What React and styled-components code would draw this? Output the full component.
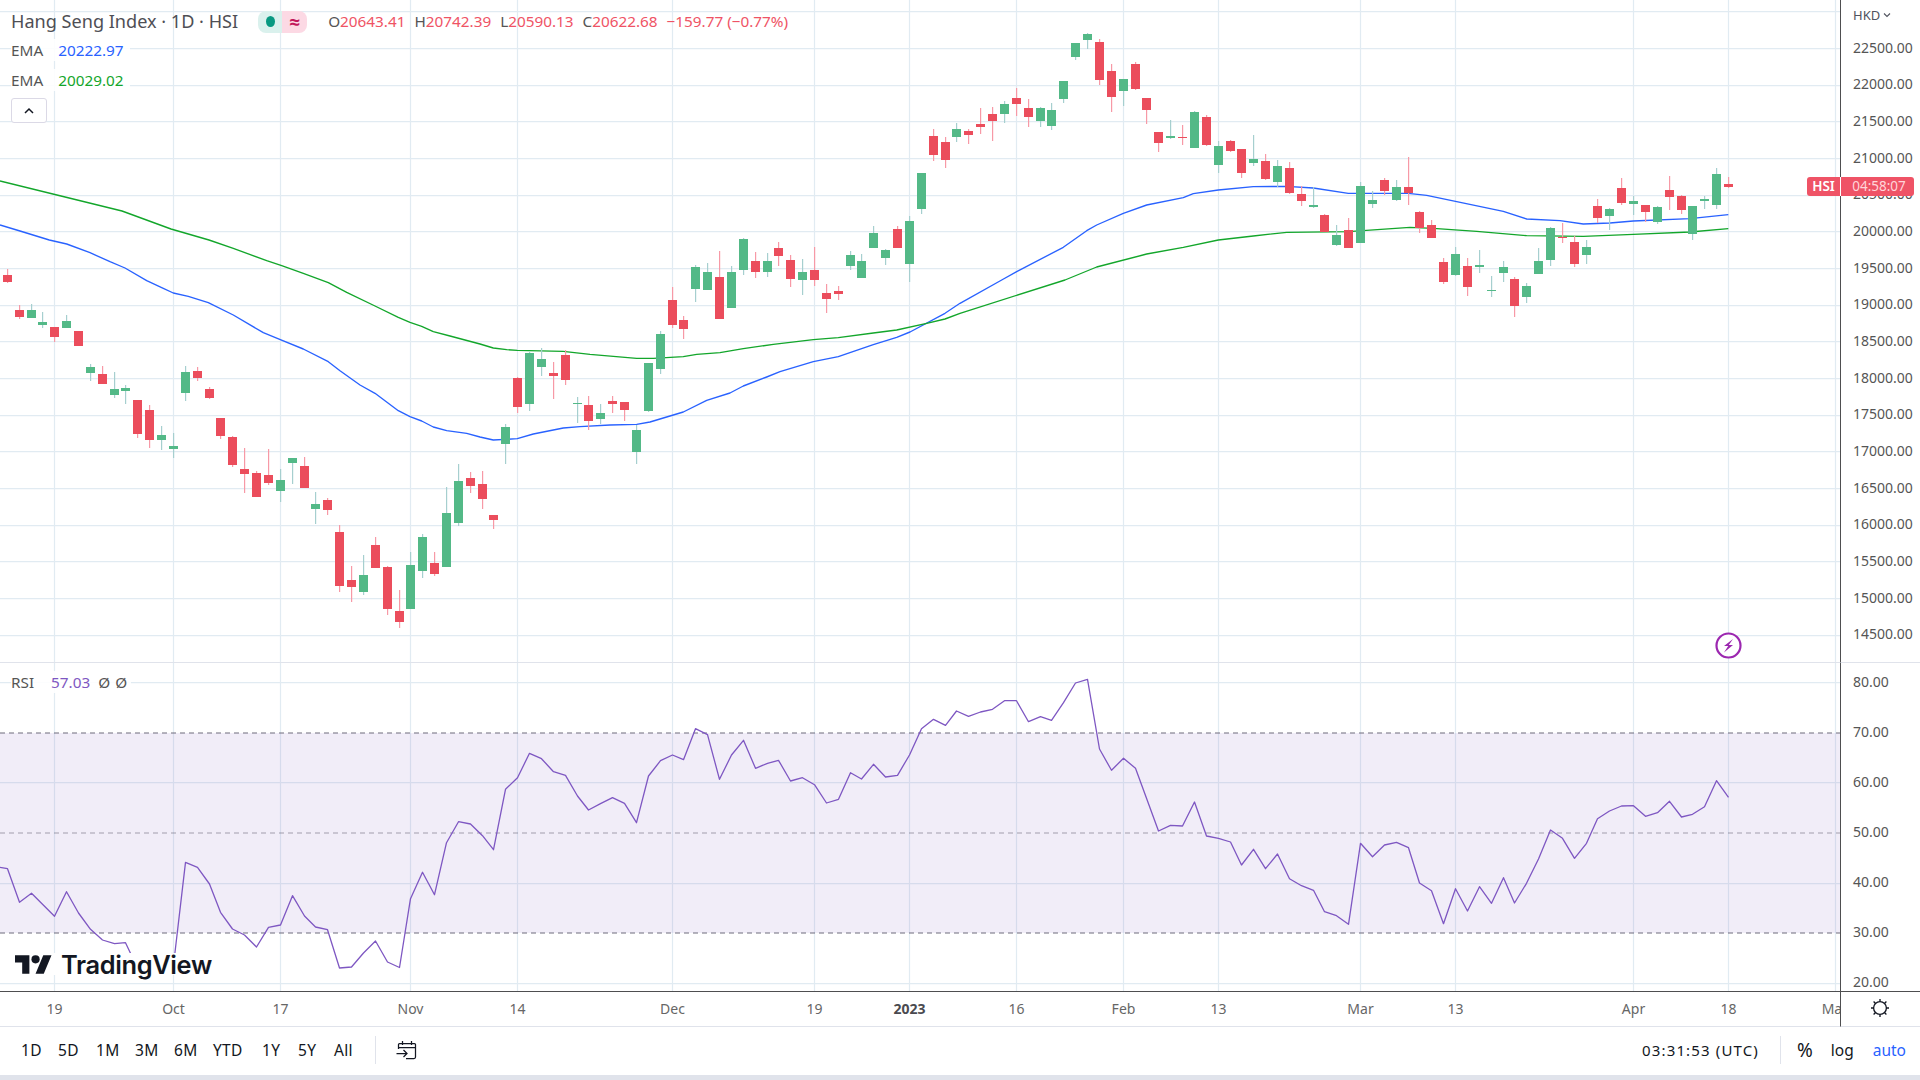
import React from "react";
import styled, { createGlobalStyle } from "styled-components";

const UI_FONT = `"Noto Sans", "Open Sans", sans-serif`;

const GlobalStyle = createGlobalStyle`
  html, body { margin: 0; padding: 0; background: #ffffff; }
  body { font-family: ${UI_FONT}; color: #131722; }
  #root { width: 1920px; height: 1080px; overflow: hidden; }
  * { box-sizing: border-box; }
`;

/* ---------- market data (measured from the picture) ---------- */

const NARROW_STEPS = [3, 10, 18, 26, 34, 41, 49, 57, 65, 72, 80, 88, 96, 104, 111, 119, 127, 134, 142];
const candleX = (i) => 7.5 + 12 * i - NARROW_STEPS.filter((s) => s <= i).length;

const group = (offset, rows) =>
  rows.map(([up, wt, bt, bb, wb]) => ({
    up: up === 1,
    wickTop: offset + wt / 3,
    bodyTop: offset + bt / 3,
    bodyBottom: offset + bb / 3,
    wickBottom: offset + wb / 3,
  }));

const CANDLES = [
  ...group(240, [
    [0, 87, 105, 126, 129], [0, 195, 210, 231, 237], [1, 192, 210, 234, 234], [1, 216, 246, 255, 264],
    [0, 261, 261, 291, 306], [1, 225, 243, 264, 264], [0, 273, 273, 318, 318], [1, 372, 381, 399, 423],
    [0, 378, 402, 432, 432], [1, 396, 447, 465, 474], [1, 435, 444, 453, 492], [0, 480, 480, 582, 594],
    [0, 495, 510, 600, 624], [1, 558, 585, 600, 630], [1, 579, 618, 627, 654], [1, 378, 396, 459, 483],
    [0, 381, 393, 414, 423], [0, 441, 447, 474, 477], [0, 534, 534, 588, 597], [0, 588, 591, 675, 681],
    [0, 624, 687, 702, 759], [0, 693, 699, 771, 771], [0, 627, 705, 729, 735], [1, 687, 720, 753, 786],
    [1, 654, 654, 669, 732], [0, 651, 678, 744, 744], [1, 756, 792, 807, 852], [0, 774, 780, 810, 825],
    [0, 855, 876, 1038, 1056], [0, 978, 1020, 1041, 1086], [1, 945, 1005, 1056, 1065], [0, 891, 915, 984, 984],
    [0, 978, 981, 1107, 1125], [0, 1050, 1113, 1146, 1164], [1, 936, 975, 1107, 1107], [1, 882, 891, 993, 1014],
    [0, 936, 969, 1002, 1008], [1, 741, 819, 981, 981], [1, 672, 723, 849, 858], [0, 696, 714, 738, 759],
    [0, 693, 732, 777, 807], [0, 825, 825, 840, 867], [1, 552, 561, 612, 672], [0, 411, 414, 501, 519],
    [1, 336, 339, 492, 513], [1, 324, 357, 381, 408], [0, 366, 399, 408, 477], [0, 330, 345, 420, 435],
    [1, 471, 489, 492, 549], [0, 468, 495, 543, 570], [1, 492, 519, 537, 552], [0, 468, 483, 492, 519],
    [0, 486, 486, 510, 543], [1, 555, 570, 636, 672], [1, 369, 369, 513, 516], [1, 273, 282, 387, 402],
    [0, 141, 180, 255, 264], [0, 228, 240, 267, 297], [1, 75, 81, 147, 186], [1, 69, 96, 150, 150],
    [0, 33, 111, 237, 237], [1, 78, 96, 204, 204], [1, -6, -3, 90, 105], [0, 36, 63, 96, 114],
    [1, 39, 63, 96, 111], [0, 6, 24, 48, 78], [0, 45, 60, 117, 141], [1, 57, 96, 120, 165],
    [0, 21, 90, 120, 138], [0, 132, 159, 177, 219], [0, 138, 153, 162, 180], [1, 33, 45, 78, 90],
    [1, 42, 63, 114, 114], [1, -42, -21, 24, 24],
  ]),
  ...group(20, [
    [1, 687, 690, 714, 735], [0, 618, 627, 684, 684], [1, 588, 603, 732, 786], [1, 459, 459, 567, 582],
    [0, 327, 348, 405, 423], [0, 351, 366, 420, 444], [1, 309, 327, 351, 366], [0, 327, 333, 345, 372],
    [0, 264, 312, 321, 342], [0, 261, 282, 303, 363], [1, 243, 252, 282, 309], [0, 204, 234, 252, 288],
    [0, 237, 264, 291, 321], [1, 261, 264, 303, 321], [1, 249, 270, 318, 330], [1, 183, 183, 237, 249],
    [1, 69, 69, 111, 120], [1, 39, 42, 60, 87], [0, 57, 66, 180, 195], [0, 132, 153, 231, 276],
    [1, 177, 177, 213, 258], [0, 126, 132, 207, 210], [0, 234, 234, 270, 312], [0, 336, 336, 369, 396],
    [1, 300, 348, 354, 357], [0, 315, 351, 354, 375], [1, 273, 276, 384, 384], [0, 285, 291, 375, 378],
    [1, 363, 378, 435, 459], [0, 360, 363, 393, 396], [0, 387, 387, 459, 474], [1, 345, 417, 429, 438],
    [0, 402, 423, 477, 480], [1, 420, 438, 486, 501], [0, 426, 444, 519, 522], [0, 498, 522, 543, 558],
    [1, 501, 555, 561, 564], [0, 582, 585, 636, 636], [1, 615, 645, 675, 678], [0, 594, 630, 684, 684],
  ]),
  ...group(140, [
    [1, 126, 138, 309, 309], [1, 153, 180, 192, 204], [0, 114, 120, 153, 165], [1, 120, 141, 180, 183],
    [0, 51, 141, 159, 195], [0, 213, 216, 264, 279], [0, 240, 255, 294, 294], [0, 354, 366, 426, 432],
    [1, 321, 342, 405, 408], [0, 354, 378, 441, 468], [1, 330, 375, 381, 399], [1, 408, 450, 453, 471],
    [1, 363, 381, 399, 426], [0, 411, 417, 498, 531], [1, 429, 438, 471, 489], [1, 324, 363, 402, 402],
    [1, 261, 264, 360, 378], [0, 249, 291, 294, 309], [0, 288, 306, 372, 381], [1, 300, 321, 345, 372],
    [0, 177, 198, 234, 249], [1, 204, 207, 228, 270], [0, 114, 144, 189, 195], [1, 168, 183, 192, 225],
    [0, 195, 195, 216, 246], [1, 198, 201, 246, 252], [0, 108, 150, 171, 210], [0, 165, 168, 210, 222],
    [1, 198, 198, 282, 300], [1, 168, 177, 183, 207], [1, 84, 102, 195, 207], [0, 111, 132, 141, 144],
  ]),
];

const crop = (xo, yo, xs, ys, pts) => pts.map(([x, y]) => [xo + x / xs, yo + y / ys]);
const toPoints = (pts) => pts.map(([x, y]) => `${x.toFixed(1)},${y.toFixed(1)}`).join(" ");

const EMA_FAST = toPoints([
  [0, 225], [20, 231],
  ...crop(0, 240, 3, 3, [[148, 0], [200, 12], [270, 38], [330, 65], [375, 84], [440, 122], [490, 145], [520, 159], [565, 169], [625, 188], [700, 225], [790, 278], [841, 299], [910, 327], [985, 365], [1020, 392], [1080, 435], [1125, 460], [1195, 512], [1230, 530], [1265, 543], [1300, 561], [1340, 572], [1400, 580], [1440, 591]]),
  ...crop(480, 240, 3, 3, [[40, 600], [112, 596], [160, 582], [250, 564], [300, 560], [390, 555], [470, 553], [510, 546], [610, 516], [680, 481], [750, 459], [790, 438], [860, 411], [900, 395], [1000, 365], [1075, 350], [1180, 314], [1250, 292], [1290, 276], [1395, 220], [1440, 190]]),
  ...crop(880, 20, 3, 3, [[365, 780], [410, 755], [550, 682], [620, 632], [650, 615], [730, 580], [800, 555], [910, 533], [940, 521], [1015, 510], [1120, 500], [1220, 499]]),
  ...crop(1300, 140, 3, 3, [[40, 144], [145, 160], [325, 160], [380, 166], [470, 185], [610, 214], [680, 237], [780, 242], [850, 252], [930, 249], [1000, 243], [1170, 236], [1285, 224]]),
]);

const EMA_SLOW = toPoints([
  [0, 181], [61, 196], [122, 211], [171, 229],
  ...crop(0, 240, 3, 3, [[627, 0], [700, 25], [800, 62], [845, 77], [910, 100], [985, 128], [1040, 157], [1125, 198], [1195, 232], [1230, 247], [1265, 259], [1300, 275], [1350, 288], [1440, 312]]),
  ...crop(480, 240, 3, 3, [[40, 324], [80, 329], [112, 331], [250, 334], [330, 343], [470, 355], [520, 355], [610, 350], [650, 343], [720, 338], [790, 326], [880, 313], [1000, 299], [1075, 293], [1180, 279], [1250, 270], [1340, 250], [1395, 237], [1440, 220]]),
  ...crop(880, 20, 3, 3, [[555, 780], [650, 741], [800, 702], [910, 682], [1015, 660], [1120, 648], [1220, 637]]),
  ...crop(1300, 140, 3, 3, [[145, 275], [330, 262], [400, 265], [530, 274], [680, 287], [850, 289], [1000, 283], [1170, 276], [1285, 266]]),
]);

const RSI_Y = [
  ...[686, 787, 760, 793, 829, 755, 819, 868, 900, 911, 908].map((z) => 640 + z / 3),
  968, 968, 968, 965,
  ...[577, 592, 642, 727, 777, 795, 831, 772, 765, 677, 738, 771, 779].map((z) => 670 + z / 3),
  968, 967, 953, 941, 962, 967.5,
  ...[686, 607, 674, 518, 455, 462, 497, 539, 358, 323, 250, 266, 305, 316, 378, 420, 401, 383, 400, 458, 318, 272, 255, 269, 176, 194, 328, 255, 211, 295, 280, 271, 333, 323, 344, 399, 388, 308, 327, 283, 321, 316, 255, 176, 148, 166, 123].map((z) => 670 + z / 3),
  ...[169, 156, 148, 122, 122, 185, 170, 181, 128, 69, 58, 267, 331, 295, 325, 415, 513, 496, 498, 426, 528, 535, 546, 615, 568, 626, 582, 656, 677, 691, 755, 767, 793, 550, 590, 555, 547, 563, 669, 692, 791, 686, 753, 680, 730, 653, 729, 670, 597, 510, 535, 595, 550, 476, 453, 438, 437, 469, 458, 424, 471, 463, 440, 362, 412].map((z) => 660 + z / 3),
];
const RSI_LINE = toPoints([[0, 867.3], ...RSI_Y.map((y, i) => [candleX(i), y])]);

const MAIN_GRID_Y = [11, 48, 85, 121, 158, 195, 231, 268, 305, 341, 378, 415, 451, 488, 525, 561, 598, 635];
const RSI_GRID_Y = [682, 782, 883, 983];
const RSI_LEVELS = [733, 833, 933];
const GRID_X = [54, 173, 280, 410, 517, 672, 814, 909, 1016, 1123, 1218, 1360, 1455, 1633, 1728, 1835];
const TIME_LABELS = ["19", "Oct", "17", "Nov", "14", "Dec", "19", "2023", "16", "Feb", "13", "Mar", "13", "Apr", "18", "May"];
const PRICES = ["22500.00", "22000.00", "21500.00", "21000.00", "20500.00", "20000.00", "19500.00", "19000.00", "18500.00", "18000.00", "17500.00", "17000.00", "16500.00", "16000.00", "15500.00", "15000.00", "14500.00"];
const RSI_TICKS = ["80.00", "70.00", "60.00", "50.00", "40.00", "30.00", "20.00"];
const RANGES = [
  ["1D", 37], ["5D", 38], ["1M", 39], ["3M", 39], ["6M", 39],
  ["YTD", 49], ["1Y", 36], ["5Y", 36], ["All", 21],
];

/* ---------- layout ---------- */

const Page = styled.div`
  width: 1920px;
  height: 1080px;
  display: flex;
  flex-direction: column;
  background: #ffffff;
`;

const ChartGrid = styled.div`
  display: grid;
  grid-template-columns: 1840px 80px;
  grid-template-rows: 663px 328px 36px;
`;

const MainPane = styled.div`
  position: relative;
  border-bottom: 1px solid #e0e3eb;
`;

const RsiPane = styled.div`
  position: relative;
`;

const PaneCanvas = styled.svg`
  display: block;
  width: 1840px;
`;

const GridLine = styled.line`
  stroke: #e1ebf2;
  stroke-width: 1.25;
`;

const Wick = styled.rect`
  fill: ${(p) => (p.$up ? "#a6cfcf" : "#f799a6")};
`;

const Body = styled.rect`
  fill: ${(p) => (p.$up ? "#53b987" : "#eb4d5c")};
`;

const SeriesLine = styled.polyline`
  fill: none;
  stroke: ${(p) => p.$color};
  stroke-width: ${(p) => p.$width};
  stroke-linejoin: round;
`;

const RsiBand = styled.rect`
  fill: rgba(126, 87, 194, 0.11);
`;

const LevelLine = styled.line`
  stroke: #6f6c7c;
  stroke-width: 1.2;
  stroke-dasharray: 5 4;
  opacity: ${(p) => p.$opacity};
`;

/* ---------- legend ---------- */

const Legend = styled.div`
  position: absolute;
  top: 9px;
  left: 0;
  display: flex;
  flex-direction: column;
  align-items: flex-start;
  padding-left: 11px;
`;

const LegendTitleRow = styled.div`
  display: flex;
  align-items: center;
  height: 24px;
`;

const Title = styled.span`
  flex: none;
  padding-right: 20px;
  font-size: 18.1px;
  color: #4f4f55;
  white-space: nowrap;
`;

const Pills = styled.span`
  display: flex;
  height: 22px;
  margin-top: 1px;
`;

const Pill = styled.span`
  width: ${(p) => p.$w}px;
  display: flex;
  align-items: center;
  justify-content: center;
  background: ${(p) => p.$bg};
  border-radius: ${(p) => p.$radius};
`;

const StatusDot = styled.span`
  width: 9px;
  height: 11px;
  border-radius: 50%;
  background: #089981;
`;

const ApproxGlyph = styled.span`
  color: #c2185b;
  font-size: 19px;
  font-weight: 700;
  line-height: 22px;
`;

const Ohlc = styled.div`
  display: flex;
  margin-left: 21px;
  gap: 9px;
  font-size: 15.3px;
  color: #555;
  white-space: nowrap;
`;

const OhlcValue = styled.span`
  color: #ef5365;
`;

const IndicatorRow = styled.div`
  display: flex;
  align-items: center;
  height: 22px;
  margin-top: ${(p) => p.$mt}px;
  padding-right: 6px;
  font-size: 15.3px;
  color: #555;
  background: rgba(255, 255, 255, 0.88);
`;

const IndicatorValue = styled.span`
  margin-left: ${(p) => p.$ml}px;
  color: ${(p) => p.$color};
`;

const CollapseButton = styled.button`
  margin-top: 7px;
  width: 36px;
  height: 25px;
  padding: 0;
  display: flex;
  align-items: center;
  justify-content: center;
  background: #ffffff;
  border: 1px solid #dbd9e6;
  border-radius: 3px;
`;

const RsiLegend = styled.div`
  position: absolute;
  top: 8px;
  left: 11px;
  display: flex;
  align-items: center;
  height: 22px;
  padding-right: 4px;
  font-size: 15.3px;
  color: #555;
  background: rgba(255, 255, 255, 0.88);
`;

const EmptySlot = styled.span`
  margin-left: ${(p) => p.$ml}px;
  color: #555;
`;

const SignalBadge = styled.div`
  position: absolute;
  left: 1715px;
  top: 632px;
  width: 27px;
  height: 27px;
`;

const WatermarkLogo = styled.div`
  position: absolute;
  left: 11px;
  top: 290px;
  height: 22px;
  padding: 0 4px;
  display: flex;
  align-items: center;
  gap: 9px;
  background: #ffffff;
`;

const WatermarkText = styled.span`
  font-family: Inter, "Noto Sans", sans-serif;
  font-size: 25.4px;
  font-weight: 600;
  letter-spacing: -0.35px;
  color: #131722;
`;

/* ---------- axes ---------- */

const PriceAxis = styled.div`
  position: relative;
  border-left: 1.25px solid #4e4e50;
  border-bottom: 1px solid #e0e3eb;
  padding-left: 12px;
  font-size: 14px;
  color: #555;
`;

const CurrencyButton = styled.div`
  display: flex;
  align-items: center;
  gap: 3px;
  height: 29px;
  font-size: 13px;
  color: #50535e;
`;

const AxisTick = styled.div`
  display: flex;
  align-items: center;
  height: ${(p) => p.$h}px;
  white-space: nowrap;
`;

const PriceTag = styled.div`
  position: absolute;
  left: -34px;
  top: 177px;
  display: flex;
  height: 19px;
  border-radius: 3px;
  font-size: 13.5px;
  line-height: 19px;
  background: #ef5366;
`;

const TagName = styled.span`
  width: 34px;
  text-align: center;
  font-weight: 600;
  color: #ffffff;
  border-right: 1px solid #ffffff;
`;

const TagCountdown = styled.span`
  width: 73px;
  padding-left: 3px;
  text-align: center;
  color: #ffd5da;
`;

const RsiAxis = styled.div`
  border-left: 1.25px solid #4e4e50;
  padding-left: 12px;
  font-size: 14px;
  color: #555;
`;

const RsiTicks = styled.div`
  margin-top: -7px;
`;

const TimeAxis = styled.div`
  display: flex;
  overflow: hidden;
  padding: 0 0 2px 54.5px;
  border-top: 1.25px solid #4e4e50;
  border-bottom: 1px solid #e0e3eb;
  font-size: 14px;
  color: #666;
  align-items: center;
`;

const TimeSlot = styled.div`
  flex: 0 0 ${(p) => p.$w}px;
  white-space: nowrap;
`;

const TimeLabel = styled.span`
  display: inline-block;
  transform: translateX(-50%);
  font-weight: ${(p) => (p.$bold ? 700 : 400)};
  color: ${(p) => (p.$bold ? "#4a4a50" : "#666")};
`;

const AxisCorner = styled.div`
  display: flex;
  align-items: center;
  justify-content: center;
  padding: 0 2px 2px 0;
  border-left: 1.25px solid #4e4e50;
  border-top: 1.25px solid #4e4e50;
  border-bottom: 1px solid #e0e3eb;
`;

/* ---------- bottom toolbar ---------- */

const Toolbar = styled.div`
  display: flex;
  align-items: center;
  height: 48px;
  padding: 0 14px 2px 21px;
  font-size: 15.5px;
  color: #131722;
`;

const RangeGroup = styled.div`
  display: flex;
`;

const RangeButton = styled.span`
  flex: 0 0 ${(p) => p.$w}px;
  letter-spacing: 0.3px;
  white-space: nowrap;
`;

const Divider = styled.span`
  width: 1px;
  height: 28px;
  background: #e0e3eb;
  margin: ${(p) => p.$margin};
`;

const ClockText = styled.span`
  margin-left: auto;
  font-size: 15px;
  letter-spacing: 1.15px;
  white-space: nowrap;
`;

const ScaleButton = styled.span`
  margin-left: ${(p) => p.$ml}px;
  font-size: ${(p) => p.$size}px;
  color: ${(p) => (p.$active ? "#2962ff" : "#131722")};
`;

const BottomStrip = styled.div`
  height: 5px;
  background: #e0e3eb;
`;

/* ---------- drawings ---------- */

const ChevronUp = () => (
  <svg width="12" height="8" viewBox="0 0 12 8" aria-hidden="true">
    <path d="M2 6l4-4 4 4" fill="none" stroke="#131722" strokeWidth="1.5" />
  </svg>
);

const ChevronDown = () => (
  <svg width="8" height="6" viewBox="0 0 8 6" aria-hidden="true">
    <path d="M1 1.5l3 3 3-3" fill="none" stroke="#50535e" strokeWidth="1.1" />
  </svg>
);

const GearIcon = () => (
  <svg width="22" height="22" viewBox="0 0 22 22" aria-hidden="true" fill="none" stroke="#131722" strokeWidth="1.35">
    <circle cx="11" cy="11" r="6.4" />
    <path d="M11 2v2.6M11 17.4V20M2 11h2.6M17.4 11H20M4.6 4.6l1.9 1.9M15.5 15.5l1.9 1.9M17.4 4.6l-1.9 1.9M6.5 15.5l-1.9 1.9" />
  </svg>
);

const CalendarJumpIcon = () => (
  <svg width="22" height="20" viewBox="0 0 22 20" aria-hidden="true" fill="none" stroke="#131722" strokeWidth="1.25">
    <path d="M2.5 9V4.5a1 1 0 0 1 1-1h15a1 1 0 0 1 1 1V17a1.5 1.5 0 0 1-1.5 1.5H10" />
    <path d="M2.5 7.5h17M6.5 1v4M15.5 1v4" />
    <path d="M0.5 13.5h10.5M7.5 10l3.5 3.5L7.5 17" />
  </svg>
);

const BoltBadgeIcon = () => (
  <svg width="27" height="27" viewBox="0 0 27 27" aria-hidden="true">
    <circle cx="13.5" cy="13.5" r="12" fill="#ffffff" stroke="#9c27b0" strokeWidth="2.2" />
    <path d="M18 7L9 14h4.2L9 20.5 18 13h-4.2z" fill="#9c27b0" />
  </svg>
);

const TvMark = () => (
  <svg width="37" height="19" viewBox="0 4 36 18" aria-hidden="true" fill="#131722">
    <path d="M14 22H7V11H0V4h14v18zM28 22h-8l7.5-18h8L28 22z" />
    <circle cx="20" cy="8" r="4" />
  </svg>
);

/* ---------- chart pieces ---------- */

const Candle = ({ x, c }) => (
  <g>
    <Wick $up={c.up} x={x - 0.5} y={c.wickTop} width="1.2" height={Math.max(c.wickBottom - c.wickTop, 1)} />
    <Body $up={c.up} x={x - 4.5} y={c.bodyTop} width="9" height={Math.max(c.bodyBottom - c.bodyTop, 1)} />
  </g>
);

const MainChart = () => (
  <PaneCanvas height="662" viewBox="0 0 1840 662" aria-hidden="true">
    {MAIN_GRID_Y.map((y) => (
      <GridLine key={y} x1="0" x2="1840" y1={y + 0.5} y2={y + 0.5} />
    ))}
    {GRID_X.map((x) => (
      <GridLine key={x} x1={x + 0.5} x2={x + 0.5} y1="0" y2="662" />
    ))}
    <SeriesLine points={EMA_FAST} $color="#2962ff" $width="1.35" />
    <SeriesLine points={EMA_SLOW} $color="#13a62b" $width="1.35" />
    {CANDLES.map((c, i) => (
      <Candle key={i} x={candleX(i)} c={c} />
    ))}
  </PaneCanvas>
);

const RsiChart = () => (
  <PaneCanvas height="328" viewBox="0 663 1840 328" aria-hidden="true">
    {RSI_GRID_Y.map((y) => (
      <GridLine key={y} x1="0" x2="1840" y1={y + 0.5} y2={y + 0.5} />
    ))}
    {GRID_X.map((x) => (
      <GridLine key={x} x1={x + 0.5} x2={x + 0.5} y1="663" y2="991" />
    ))}
    <RsiBand x="0" y="733" width="1840" height="200" />
    {RSI_LEVELS.map((y, i) => (
      <LevelLine key={y} x1="0" x2="1840" y1={y} y2={y} $opacity={i === 1 ? 0.6 : 1} />
    ))}
    <SeriesLine points={RSI_LINE} $color="#7e57c2" $width="1.3" />
  </PaneCanvas>
);

const OHLC = [
  ["O", "20643.41"],
  ["H", "20742.39"],
  ["L", "20590.13"],
  ["C", "20622.68"],
];

export default function App() {
  return (
    <Page>
      <GlobalStyle />
      <ChartGrid>
        <MainPane>
          <MainChart />
          <Legend>
            <LegendTitleRow>
              <Title>Hang Seng Index · 1D · HSI</Title>
              <Pills>
                <Pill $w={24} $bg="#daf1ed" $radius="8px 0 0 8px">
                  <StatusDot />
                </Pill>
                <Pill $w={25} $bg="#fcd9e4" $radius="0 8px 8px 0">
                  <ApproxGlyph>≈</ApproxGlyph>
                </Pill>
              </Pills>
              <Ohlc>
                {OHLC.map(([k, v]) => (
                  <span key={k}>
                    {k}
                    <OhlcValue>{v}</OhlcValue>
                  </span>
                ))}
                <OhlcValue>−159.77 (−0.77%)</OhlcValue>
              </Ohlc>
            </LegendTitleRow>
            <IndicatorRow $mt={6}>
              EMA<IndicatorValue $ml={15} $color="#2962ff">20222.97</IndicatorValue>
            </IndicatorRow>
            <IndicatorRow $mt={8}>
              EMA<IndicatorValue $ml={15} $color="#13a62b">20029.02</IndicatorValue>
            </IndicatorRow>
            <CollapseButton aria-label="Collapse legend">
              <ChevronUp />
            </CollapseButton>
          </Legend>
          <SignalBadge>
            <BoltBadgeIcon />
          </SignalBadge>
        </MainPane>

        <PriceAxis>
          <CurrencyButton>
            HKD
            <ChevronDown />
          </CurrencyButton>
          {PRICES.map((p) => (
            <AxisTick key={p} $h={36.67}>
              {p}
            </AxisTick>
          ))}
          <PriceTag>
            <TagName>HSI</TagName>
            <TagCountdown>04:58:07</TagCountdown>
          </PriceTag>
        </PriceAxis>

        <RsiPane>
          <RsiChart />
          <RsiLegend>
            RSI
            <IndicatorValue $ml={17} $color="#7e57c2">57.03</IndicatorValue>
            <EmptySlot $ml={8}>Ø</EmptySlot>
            <EmptySlot $ml={5}>Ø</EmptySlot>
          </RsiLegend>
          <WatermarkLogo>
            <TvMark />
            <WatermarkText>TradingView</WatermarkText>
          </WatermarkLogo>
        </RsiPane>

        <RsiAxis>
          <RsiTicks>
            {RSI_TICKS.map((t) => (
              <AxisTick key={t} $h={50.15}>
                {t}
              </AxisTick>
            ))}
          </RsiTicks>
        </RsiAxis>

        <TimeAxis>
          {TIME_LABELS.map((label, i) => (
            <TimeSlot key={i} $w={(GRID_X[i + 1] ?? 1900) - GRID_X[i]}>
              <TimeLabel $bold={label === "2023"}>{label}</TimeLabel>
            </TimeSlot>
          ))}
        </TimeAxis>
        <AxisCorner>
          <GearIcon />
        </AxisCorner>
      </ChartGrid>

      <Toolbar>
        <RangeGroup>
          {RANGES.map(([label, w]) => (
            <RangeButton key={label} $w={w}>{label}</RangeButton>
          ))}
        </RangeGroup>
        <Divider $margin="0 20px 0 20px" />
        <CalendarJumpIcon />
        <ClockText>03:31:53 (UTC)</ClockText>
        <Divider $margin="0 16px 0 21px" />
        <ScaleButton $ml={0} $size={19}>%</ScaleButton>
        <ScaleButton $ml={18} $size={15.5}>log</ScaleButton>
        <ScaleButton $ml={19} $size={15.5} $active>auto</ScaleButton>
      </Toolbar>
      <BottomStrip />
    </Page>
  );
}
